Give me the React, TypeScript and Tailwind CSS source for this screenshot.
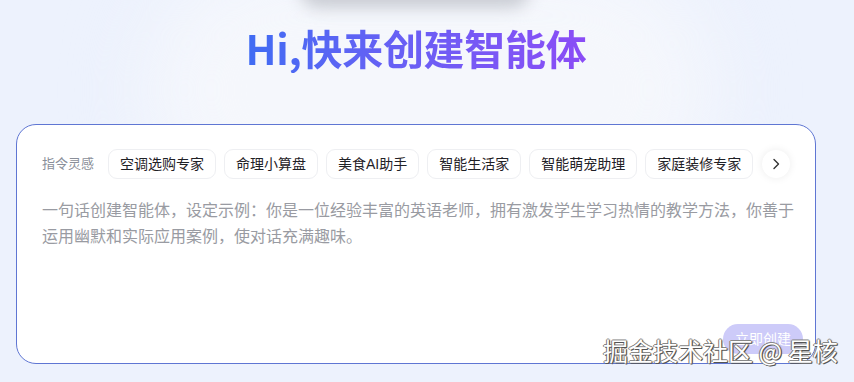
import React from "react";

const chips = ["空调选购专家", "命理小算盘", "美食AI助手", "智能生活家", "智能萌宠助理", "家庭装修专家"];

export default function App() {
  return (
    <div
      className="relative w-[854px] h-[382px] overflow-hidden bg-[#edf2fd]"
      style={{ fontFamily: '"Liberation Sans", "Noto Sans CJK SC", sans-serif' }}
    >
      {/* soft background glows */}
      <div className="absolute left-[150px] top-[-40px] w-[560px] h-[260px] rounded-full bg-[#f5f7fc] blur-[40px]" />
      <div className="absolute left-[300px] top-[-30px] w-[230px] h-[38px] rounded-full bg-[#c9ccd3] blur-[8px]" />

      <div className="relative ml-4 w-[800px] flex flex-col items-center">
        <h1
          className="mt-[21px] h-[52px] text-[41px] leading-[52px] font-bold bg-gradient-to-r from-[#3f6cf3] to-[#8a4cf6] bg-clip-text text-transparent"
          style={{ fontFamily: '"Noto Sans CJK SC", sans-serif', letterSpacing: "-0.3px" }}
        >
          Hi,快来创建智能体
        </h1>

        <div className="mt-[51px] w-[800px] h-[240px] rounded-[20px] border border-[#5f76d3] bg-white pl-[25px] pr-[12px] pt-[24px] flex flex-col">
          <div className="flex items-center h-[30px]">
            <span className="text-[13px] text-[#8a8f99] mr-[14px] whitespace-nowrap">指令灵感</span>
            <div className="flex items-center gap-[8px]">
              {chips.map((c) => (
                <div
                  key={c}
                  className="h-[30px] px-[11px] flex items-center rounded-[9px] border border-[#eeeff2] text-[14px] text-[#1f2126] whitespace-nowrap"
                >
                  {c}
                </div>
              ))}
              <div className="ml-[1px] w-[28px] h-[28px] rounded-full bg-white shadow-[0_0_8px_rgba(0,0,0,0.08)] flex items-center justify-center">
                <svg width="14" height="14" viewBox="0 0 14 14" fill="none">
                  <path d="M5 2.5 L9.5 7 L5 11.5" stroke="#333" strokeWidth="1.4" strokeLinecap="round" strokeLinejoin="round" />
                </svg>
              </div>
            </div>
          </div>

          <p className="mt-[19px] w-[760px] text-[16px] leading-[26px] text-[#999ba2]">
            一句话创建智能体，设定示例：你是一位经验丰富的英语老师，拥有激发学生学习热情的教学方法，你善于运用幽默和实际应用案例，使对话充满趣味。
          </p>

          <div className="mt-auto mb-[9px] flex justify-end">
            <div className="w-[80px] h-[30px] rounded-full bg-[#cdcbf9] text-white text-[14px] flex items-center justify-center">
              立即创建
            </div>
          </div>
        </div>
      </div>

      {/* watermark */}
      <div
        className="absolute left-[603px] top-[334px] text-[25px] leading-[32px] text-white whitespace-nowrap"
        style={{
          fontFamily: '"Noto Sans CJK SC", sans-serif',
          textShadow: "1px 1px 0 #555, -1px 0 0 #777, 0 -1px 0 #888, 1px 0 1px #444",
        }}
      >
        掘金技术社区 @ 星核
      </div>
    </div>
  );
}
